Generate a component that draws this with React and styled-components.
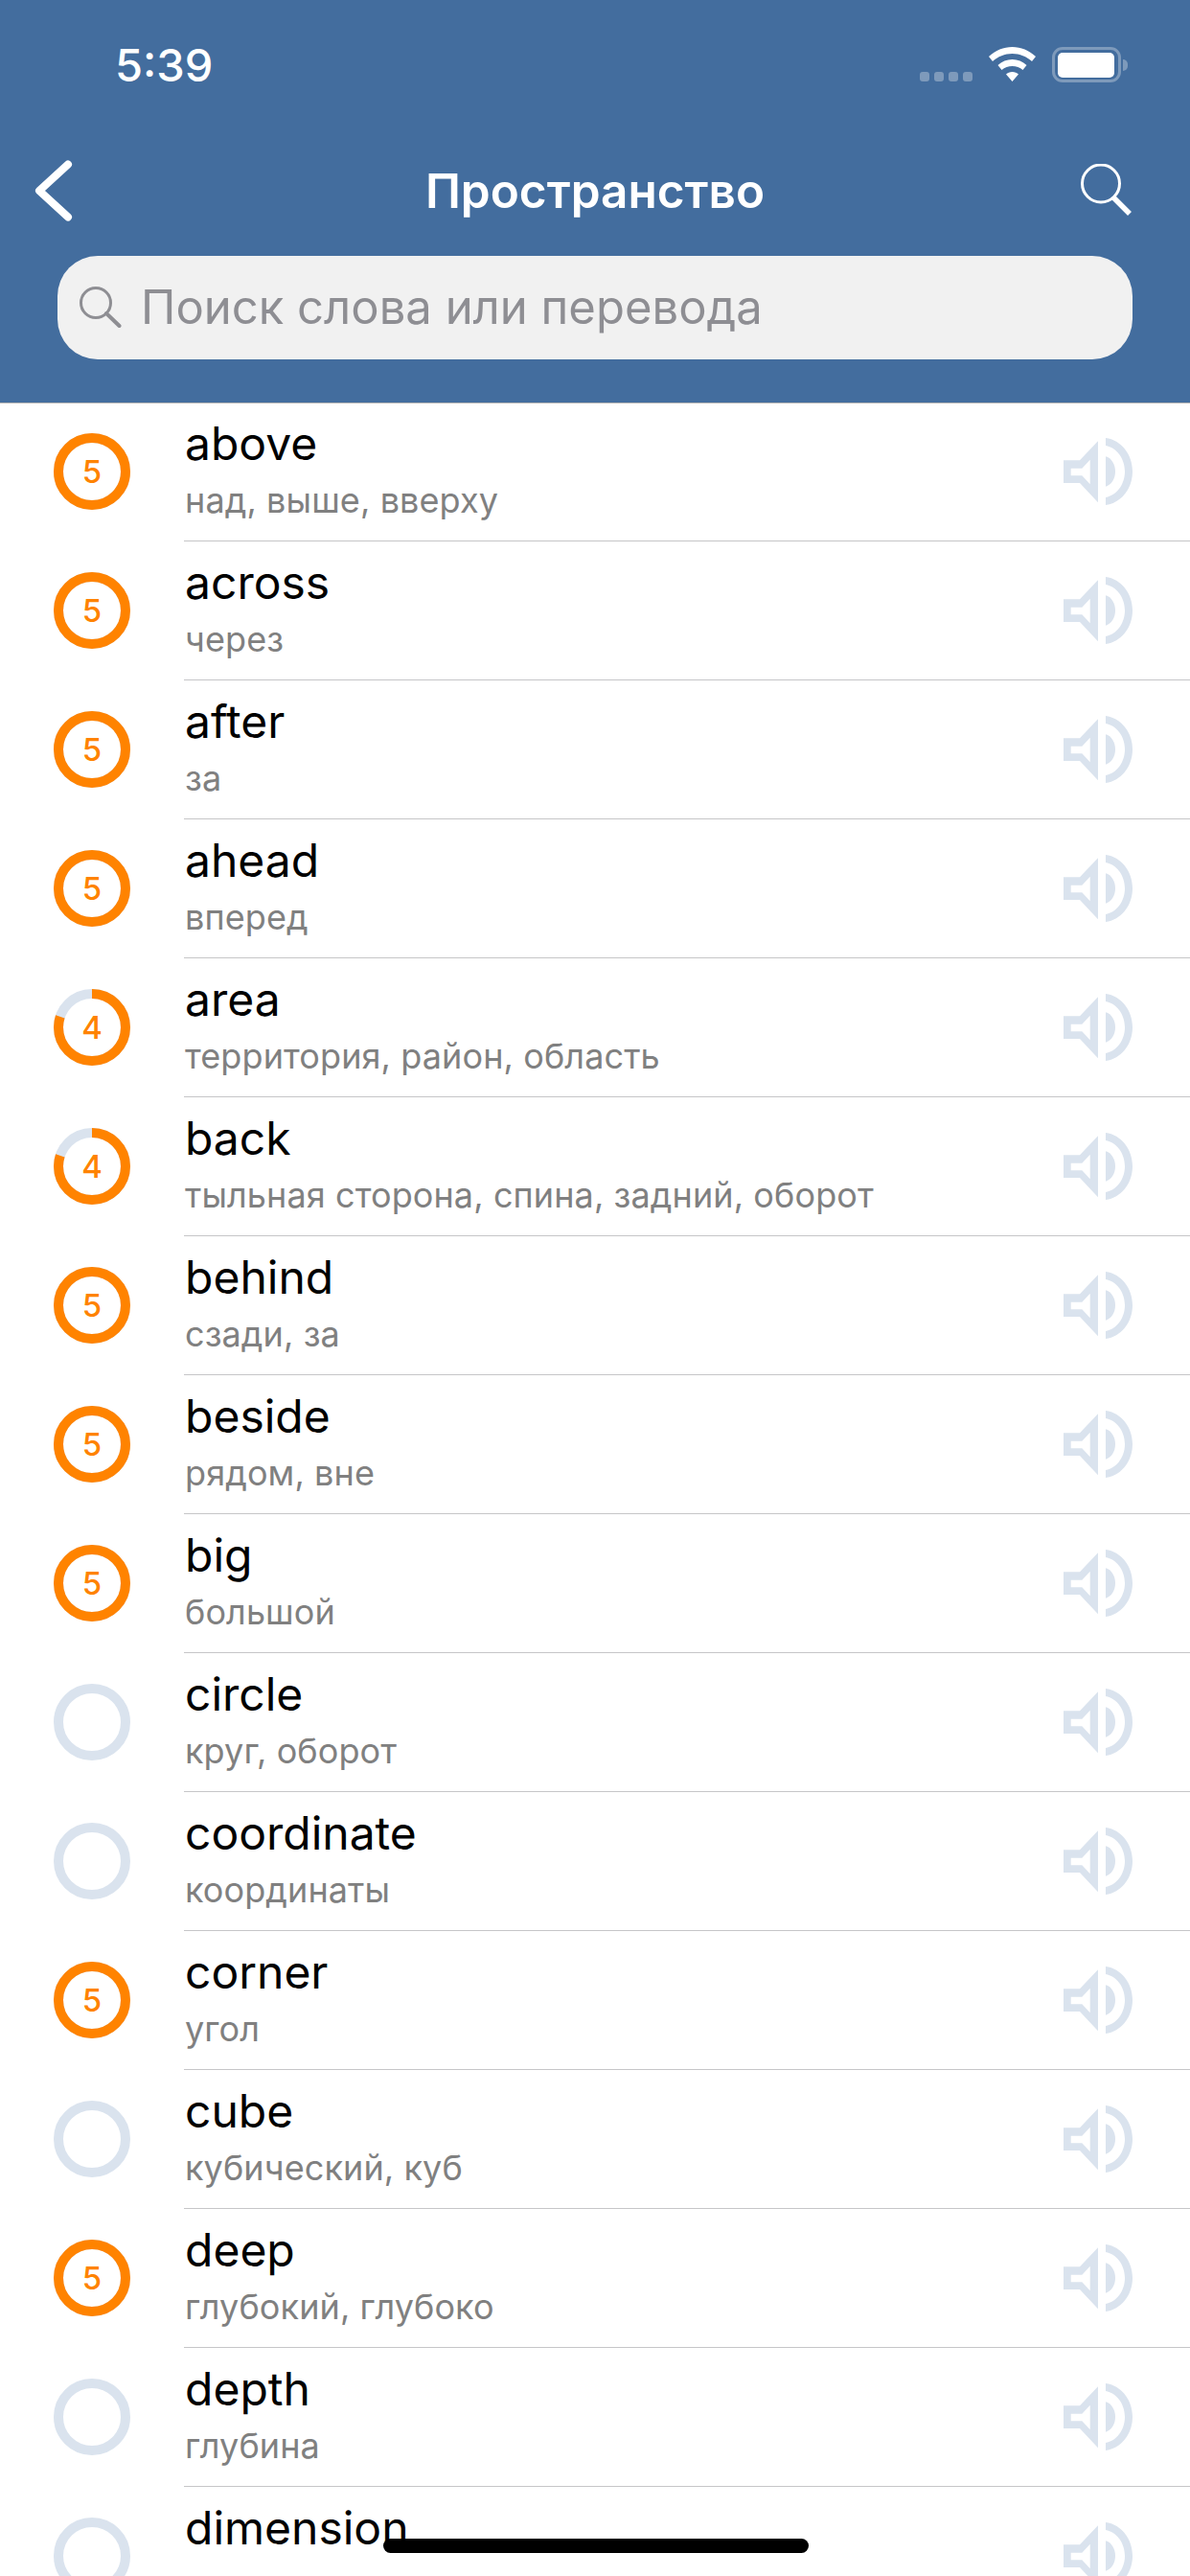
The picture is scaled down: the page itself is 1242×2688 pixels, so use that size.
import React from "react";
import styled, { createGlobalStyle } from "styled-components";

const words = [
  { en: "above", ru: "над, выше, вверху", level: 5 },
  { en: "across", ru: "через", level: 5 },
  { en: "after", ru: "за", level: 5 },
  { en: "ahead", ru: "вперед", level: 5 },
  { en: "area", ru: "территория, район, область", level: 4 },
  { en: "back", ru: "тыльная сторона, спина, задний, оборот", level: 4 },
  { en: "behind", ru: "сзади, за", level: 5 },
  { en: "beside", ru: "рядом, вне", level: 5 },
  { en: "big", ru: "большой", level: 5 },
  { en: "circle", ru: "круг, оборот", level: 0 },
  { en: "coordinate", ru: "координаты", level: 0 },
  { en: "corner", ru: "угол", level: 5 },
  { en: "cube", ru: "кубический, куб", level: 0 },
  { en: "deep", ru: "глубокий, глубоко", level: 5 },
  { en: "depth", ru: "глубина", level: 0 },
  { en: "dimension", ru: "", level: 0 },
];

const GlobalStyle = createGlobalStyle`
  html, body {
    margin: 0;
    padding: 0;
    background: #fff;
  }
  body {
    font-family: Inter, "Liberation Sans", sans-serif;
  }
`;

const Screen = styled.div`
  position: relative;
  width: 1242px;
  height: 2688px;
  overflow: hidden;
  background: #fff;
`;

const Header = styled.header`
  position: relative;
  z-index: 1;
  height: 421px;
  box-sizing: border-box;
  background: #436d9e;
  border-bottom: 1px solid #b5b5b5;
  display: flex;
  flex-direction: column;
`;

const StatusBar = styled.div`
  height: 132px;
  display: flex;
  align-items: flex-start;
  justify-content: space-between;
  padding: 46px 72px 0 120px;
  box-sizing: border-box;
`;

const Time = styled.div`
  color: #fff;
  font-size: 47px;
  font-weight: 500;
  line-height: 44px;
`;

const StatusIcons = styled.div`
  display: flex;
  align-items: flex-start;
  padding-top: 3px;
`;

const Dots = styled.div`
  display: flex;
  gap: 5px;
  margin-top: 26px;
  margin-right: 17px;
  span {
    width: 10px;
    height: 10px;
    border-radius: 3px;
    background: #7e9abb;
  }
`;

const Battery = styled.div`
  position: relative;
  width: 72px;
  height: 37px;
  margin-left: 17px;
  box-sizing: border-box;
  border: 3px solid #7e9abb;
  border-radius: 11px;
  padding: 3px 4px 2px 3px;
  &::before {
    content: "";
    display: block;
    height: 100%;
    border-radius: 5px;
    background: #fff;
  }
  &::after {
    content: "";
    position: absolute;
    right: -10px;
    top: 10px;
    width: 5px;
    height: 12px;
    border-radius: 0 6px 6px 0;
    background: #7e9abb;
  }
`;

const NavBar = styled.div`
  height: 133px;
  display: flex;
  align-items: center;
  padding: 0 36px;
  box-sizing: border-box;
`;

const NavSide = styled.div`
  flex: 1;
  display: flex;
  justify-content: ${(p) => (p.$end ? "flex-end" : "flex-start")};
  svg {
    margin-right: ${(p) => (p.$end ? "25px" : "0")};
  }
`;

const Title = styled.h1`
  margin: 0;
  color: #fff;
  font-size: 49.5px;
  font-weight: 600;
`;

const SearchBox = styled.div`
  height: 108px;
  margin: 2px 60px 0;
  background: #f1f1f1;
  border-radius: 42px;
  display: flex;
  align-items: center;
  padding: 0 23px;
  gap: 20px;
  color: #8e8e93;
  font-size: 49px;
  span {
    margin-top: -2px;
  }
`;

const Rows = styled.div`
  margin-top: -1px;
`;

const Row = styled.div`
  height: 145px;
  box-sizing: border-box;
  display: flex;
  align-items: stretch;
  padding-left: 56px;
`;

const Badge = styled.div`
  position: relative;
  flex: none;
  width: 80px;
  height: 80px;
  margin-top: 32px;
  margin-right: 56px;
  display: flex;
  align-items: center;
  justify-content: center;
  color: #ff8300;
  font-size: 33px;
  font-weight: 500;
  svg {
    position: absolute;
    inset: 0;
  }
`;

const RowBody = styled.div`
  flex: 1;
  display: flex;
  align-items: flex-start;
  justify-content: space-between;
  padding-right: 60px;
  border-bottom: 1px solid #c6c6c8;
`;

const Words = styled.div`
  padding-top: 14px;
  padding-left: 1px;
`;

const Word = styled.div`
  color: #000;
  font-size: 48px;
  line-height: 58px;
`;

const Translation = styled.div`
  color: #808080;
  font-size: 36px;
  line-height: 44px;
  margin-top: 8px;
  letter-spacing: 0.1px;
`;

const Speaker = styled.svg`
  width: 72px;
  height: 70px;
  margin-top: 37px;
  flex: none;
`;

const HomeBar = styled.div`
  position: absolute;
  z-index: 2;
  left: 400px;
  bottom: 24px;
  width: 444px;
  height: 15px;
  border-radius: 8px;
  background: #000;
`;

const ProgressRing = ({ level }) => {
  const r = 35;
  const len = 2 * Math.PI * r;
  return (
    <svg width="80" height="80" viewBox="0 0 80 80">
      <circle cx="40" cy="40" r={r} fill="none" stroke="#dae3ee" strokeWidth="10" />
      {level > 0 && (
        <circle
          cx="40"
          cy="40"
          r={r}
          fill="none"
          stroke="#ff8300"
          strokeWidth="10"
          strokeDasharray={`${(len * level) / 5} ${len}`}
          transform="rotate(-90 40 40)"
        />
      )}
    </svg>
  );
};

const SpeakerIcon = () => (
  <Speaker viewBox="0 0 72 70">
    <path
      fill="#dae3ee"
      fillRule="evenodd"
      d="M0 23.3H17L36 3.3V67.3L17 47H0ZM7.7 31.7V39.3H19.3L27.700 48.3V22.7L19.3 31.7Z"
    />
    <path fill="#dae3ee" d="M44 19.3C50 21 54 27.5 54 35C54 42.5 50 49 44 50.7Z" />
    <path
      fill="#dae3ee"
      d="M44 0C60 2 72 17 72 35C72 53 60 68 44 70V62C55 60 64 49 64 35C64 21 55 10 44 8Z"
    />
  </Speaker>
);

const WordRow = ({ item }) => (
  <Row>
    <Badge>
      <ProgressRing level={item.level} />
      {item.level > 0 && item.level}
    </Badge>
    <RowBody>
      <Words>
        <Word>{item.en}</Word>
        {item.ru && <Translation>{item.ru}</Translation>}
      </Words>
      <SpeakerIcon />
    </RowBody>
  </Row>
);

const App = () => {
  return (
    <Screen>
      <GlobalStyle />
      <Header>
        <StatusBar>
          <Time>5:39</Time>
          <StatusIcons>
            <Dots>
              <span />
              <span />
              <span />
              <span />
            </Dots>
            <svg width="49" height="36" viewBox="0 0 49 36">
              <path
                fill="#fff"
                d="M24.500 0C33.500 0 42 3.500 49 10L45 15C39.500 10 32.500 7 24.500 7C16.500 7 9.500 10 4 15L0 10C7 3.500 15.500 0 24.500 0ZM24.500 13C30 13 35.500 15 39.500 19L35.500 24C32.500 21.500 28.500 20 24.500 20C20.500 20 16.500 21.500 13.500 24L9.500 19C13.500 15 19 13 24.500 13ZM24.500 26C27 26 29.500 27 31 28.500L24.500 36L18 28.500C19.500 27 22 26 24.500 26Z"
              />
            </svg>
            <Battery />
          </StatusIcons>
        </StatusBar>
        <NavBar>
          <NavSide>
            <svg width="40" height="66" viewBox="0 0 40 66">
              <path
                d="M35 5.500L5 33L35 60.500"
                fill="none"
                stroke="#fff"
                strokeWidth="8"
                strokeLinecap="round"
                strokeLinejoin="round"
              />
            </svg>
          </NavSide>
          <Title>Пространство</Title>
          <NavSide $end>
            <svg width="54" height="56" viewBox="0 0 54 56">
              <circle cx="22" cy="20.5" r="19.5" fill="none" stroke="#fff" strokeWidth="3" />
              <path d="M35 35L52 52" stroke="#fff" strokeWidth="5.500" />
            </svg>
          </NavSide>
        </NavBar>
        <SearchBox>
          <svg width="44" height="44" viewBox="0 0 44 44">
            <circle cx="17" cy="17" r="15.500" fill="none" stroke="#8e8e93" strokeWidth="3" />
            <path d="M28 28L41.500 41" stroke="#8e8e93" strokeWidth="4" strokeLinecap="round" />
          </svg>
          <span>Поиск слова или перевода</span>
        </SearchBox>
      </Header>
      <Rows>
        {words.map((item) => (
          <WordRow key={item.en} item={item} />
        ))}
      </Rows>
      <HomeBar />
    </Screen>
  );
};

export default App;
